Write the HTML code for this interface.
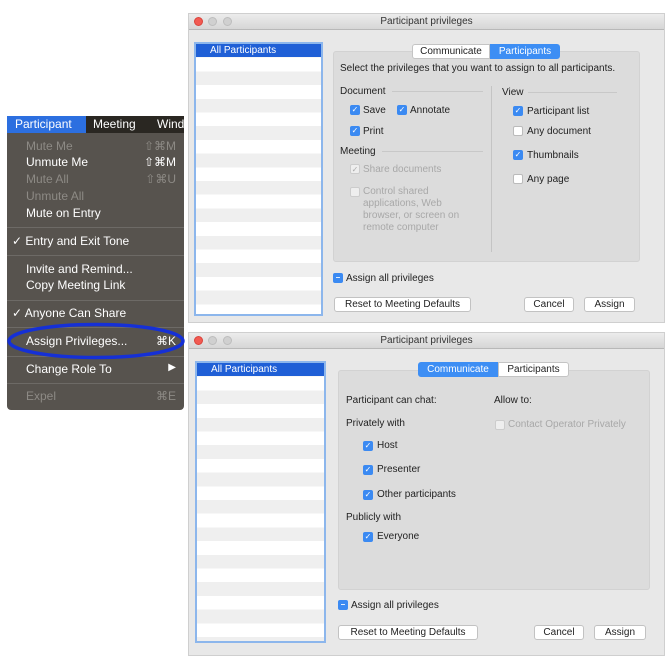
<!DOCTYPE html><html><head><style>
*{margin:0;padding:0;box-sizing:border-box}
body{width:667px;height:656px;background:#fff;position:relative;overflow:hidden;font-family:"Liberation Sans",sans-serif;font-size:10px;color:#222}
.a{position:absolute;white-space:nowrap}
.win{position:absolute;background:#e8e8e8;border:1px solid #cfcfcf}
.tb{position:absolute;left:0;right:0;top:0;height:16px;background:linear-gradient(#ececec,#d6d6d6);border-bottom:1px solid #b8b8b8;text-align:center;font-size:10px;line-height:16px;color:#333}
.dot{position:absolute;top:3px;width:9px;height:9px;border-radius:50%;background:#d0d0d0;border:1px solid #bdbdbd}
.list{position:absolute;border:2px solid #8cb6ec;background:repeating-linear-gradient(#efefef 0 13.7px,#fff 13.7px 27.4px)}
.list .h{background:#1f5fd6;color:#fff;height:13px;line-height:13px;padding-left:14px;font-size:10px}
.panel{position:absolute;background:#dcdcdc;border:1px solid #d2d2d2;border-radius:3px}
.tab{position:absolute;height:15px;line-height:14px;text-align:center;font-size:10px;border:1px solid #c4c4c4;background:#fff}
.tab.on{background:#3d8ef4;color:#fff;border-color:#3d8ef4}
.cb{position:absolute;width:10px;height:10px;border-radius:2px;background:#3b8af2;color:#fff;font-size:8px;line-height:10px;text-align:center}
.cb.off{background:#fff;border:1px solid #bbb}
.cb.dis{background:#eee;border:1px solid #ccc;color:#aaa}
.g{color:#a8a8a8}
.btn{position:absolute;height:15px;line-height:13px;text-align:center;background:#fff;border:1px solid #c2c2c2;border-radius:3px;font-size:10px}
.hr{position:absolute;height:1px;background:#c8c8c8}
.menu{position:absolute;left:7px;top:116px;width:177px;height:294px;background:#57534e;border-radius:0 0 4px 4px}
.mi{position:absolute;left:19px;color:#fff;font-size:12px}
.mi.d{color:#8d8a85}
.sc{position:absolute;right:8px;color:#fff;font-size:12px}
.sc.d{color:#8d8a85}
.sep{position:absolute;left:0;right:0;height:1px;background:#6d6a66}
</style></head><body>

<div class="menu">
<div class="a" style="left:0;top:0;width:177px;height:17px;background:#2a2722"></div>
<div class="a" style="left:0;top:0;width:79px;height:17px;background:#2c6fe0;color:#fff;font-size:12px;line-height:17px;padding-left:8px">Participant</div>
<div class="a" style="left:86px;top:0;color:#fff;font-size:12px;line-height:17px">Meeting</div>
<div class="a" style="left:150px;top:0;color:#fff;font-size:12px;line-height:17px">Wind</div>
<div class="mi d" style="top:23px">Mute Me</div><div class="sc d" style="top:23px">⇧⌘M</div>
<div class="mi" style="top:39px">Unmute Me</div><div class="sc" style="top:39px">⇧⌘M</div>
<div class="mi d" style="top:56px">Mute All</div><div class="sc d" style="top:56px">⇧⌘U</div>
<div class="mi d" style="top:73px">Unmute All</div>
<div class="mi" style="top:90px">Mute on Entry</div>
<div class="sep" style="top:111px"></div>
<div class="mi" style="top:118px;left:5px">✓ Entry and Exit Tone</div>
<div class="sep" style="top:139px"></div>
<div class="mi" style="top:146px">Invite and Remind...</div>
<div class="mi" style="top:162px">Copy Meeting Link</div>
<div class="sep" style="top:184px"></div>
<div class="mi" style="top:190px;left:5px">✓ Anyone Can Share</div>
<div class="sep" style="top:211px"></div>
<div class="mi" style="top:218px">Assign Privileges...</div><div class="sc" style="top:218px">⌘K</div>
<div class="sep" style="top:240px"></div>
<div class="mi" style="top:246px">Change Role To</div><div class="sc" style="top:246px;font-size:10px">▶</div>
<div class="sep" style="top:267px"></div>
<div class="mi d" style="top:273px">Expel</div><div class="sc d" style="top:273px">⌘E</div>
</div>
<svg class="a" style="left:0;top:318px" width="190" height="46"><ellipse cx="96" cy="23" rx="87" ry="16.5" fill="none" stroke="#1530d6" stroke-width="3.5"/></svg>

<!-- top window -->
<div class="win" style="left:188px;top:13px;width:477px;height:310px">
<div class="tb">Participant privileges</div>
<div class="dot" style="left:5px;background:#f25a52;border-color:#d9443c"></div><div class="dot" style="left:19px"></div><div class="dot" style="left:34px"></div>
</div>
<div class="list" style="left:194px;top:42px;width:129px;height:274px"><div class="h">All Participants</div></div>
<div class="panel" style="left:333px;top:51px;width:307px;height:211px"></div>
<div class="tab" style="left:412px;top:44px;width:78px;border-radius:3px 0 0 3px">Communicate</div>
<div class="tab on" style="left:490px;top:44px;width:70px;border-radius:0 3px 3px 0">Participants</div>
<div class="a" style="left:340px;top:63px">Select the privileges that you want to assign to all participants.</div>
<div class="a" style="left:340px;top:86px">Document</div><div class="hr" style="left:392px;top:91px;width:91px"></div>
<div class="cb" style="left:350px;top:105px">✓</div><div class="a" style="left:363px;top:105px">Save</div>
<div class="cb" style="left:397px;top:105px">✓</div><div class="a" style="left:410px;top:105px">Annotate</div>
<div class="cb" style="left:350px;top:126px">✓</div><div class="a" style="left:363px;top:126px">Print</div>
<div class="a" style="left:340px;top:146px">Meeting</div><div class="hr" style="left:382px;top:151px;width:101px"></div>
<div class="cb dis" style="left:350px;top:164px">✓</div><div class="a g" style="left:363px;top:164px">Share documents</div>
<div class="cb dis" style="left:350px;top:187px"></div>
<div class="a g" style="left:363px;top:186px;line-height:12px">Control shared<br>applications, Web<br>browser, or screen on<br>remote computer</div>
<div class="a" style="left:491px;top:86px;width:1px;height:166px;background:#c4c4c4"></div>
<div class="a" style="left:502px;top:87px">View</div><div class="hr" style="left:528px;top:92px;width:89px"></div>
<div class="cb" style="left:513px;top:106px">✓</div><div class="a" style="left:527px;top:106px">Participant list</div>
<div class="cb off" style="left:513px;top:126px"></div><div class="a" style="left:527px;top:126px">Any document</div>
<div class="cb" style="left:513px;top:150px">✓</div><div class="a" style="left:527px;top:150px">Thumbnails</div>
<div class="cb off" style="left:513px;top:174px"></div><div class="a" style="left:527px;top:174px">Any page</div>
<div class="cb" style="left:333px;top:273px;font-weight:bold">–</div><div class="a" style="left:346px;top:273px">Assign all privileges</div>
<div class="btn" style="left:334px;top:297px;width:137px">Reset to Meeting Defaults</div>
<div class="btn" style="left:524px;top:297px;width:50px">Cancel</div>
<div class="btn" style="left:584px;top:297px;width:51px">Assign</div>

<!-- bottom window -->
<div class="win" style="left:188px;top:332px;width:477px;height:324px">
<div class="tb">Participant privileges</div>
<div class="dot" style="left:5px;background:#f25a52;border-color:#d9443c"></div><div class="dot" style="left:19px"></div><div class="dot" style="left:34px"></div>
</div>
<div class="list" style="left:195px;top:361px;width:131px;height:282px"><div class="h">All Participants</div></div>
<div class="panel" style="left:338px;top:370px;width:312px;height:220px"></div>
<div class="tab on" style="left:418px;top:362px;width:80px;border-radius:3px 0 0 3px">Communicate</div>
<div class="tab" style="left:498px;top:362px;width:71px;border-radius:0 3px 3px 0">Participants</div>
<div class="a" style="left:346px;top:395px">Participant can chat:</div>
<div class="a" style="left:494px;top:395px">Allow to:</div>
<div class="a" style="left:346px;top:418px">Privately with</div>
<div class="cb dis" style="left:495px;top:420px"></div><div class="a g" style="left:508px;top:419px">Contact Operator Privately</div>
<div class="cb" style="left:363px;top:441px">✓</div><div class="a" style="left:377px;top:440px">Host</div>
<div class="cb" style="left:363px;top:465px">✓</div><div class="a" style="left:377px;top:464px">Presenter</div>
<div class="cb" style="left:363px;top:490px">✓</div><div class="a" style="left:377px;top:489px">Other participants</div>
<div class="a" style="left:346px;top:512px">Publicly with</div>
<div class="cb" style="left:363px;top:532px">✓</div><div class="a" style="left:377px;top:531px">Everyone</div>
<div class="cb" style="left:338px;top:600px;font-weight:bold">–</div><div class="a" style="left:351px;top:600px">Assign all privileges</div>
<div class="btn" style="left:338px;top:625px;width:140px">Reset to Meeting Defaults</div>
<div class="btn" style="left:534px;top:625px;width:50px">Cancel</div>
<div class="btn" style="left:594px;top:625px;width:52px">Assign</div>
</body></html>
